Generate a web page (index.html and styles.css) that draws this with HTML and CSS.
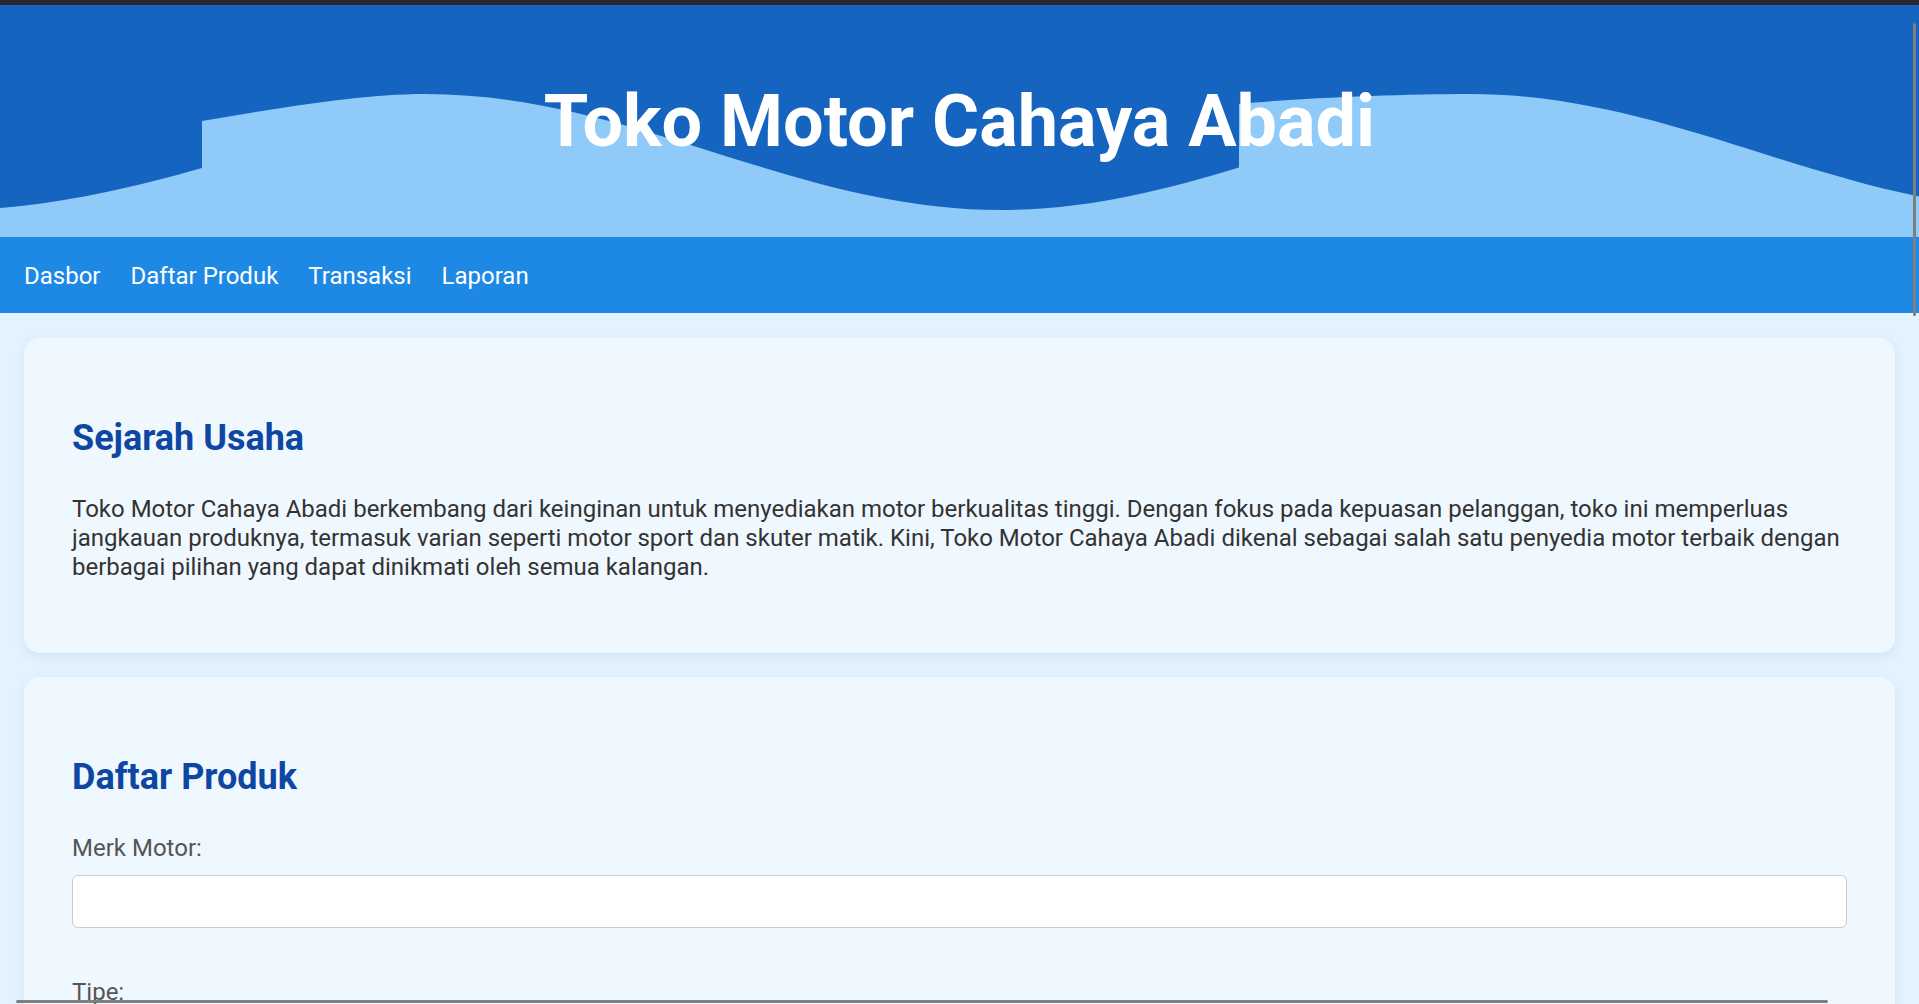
FILE: index.html
```html
<!DOCTYPE html>
<html lang="id">
<head>
<meta charset="utf-8">
<title>Toko Motor Cahaya Abadi</title>
<link rel="stylesheet" href="styles.css">
</head>
<body>
<div class="chrome-bar"></div>
<header class="site-header">
  <svg class="wave" viewBox="0 5 1919 232" preserveAspectRatio="none" aria-hidden="true">
    <defs>
      <clipPath id="clipLeft"><rect x="0" y="0" width="1239" height="300"/></clipPath>
    </defs>
    <path clip-path="url(#clipLeft)" fill="#90caf9" d="M0,237 L0,208 C60,204 140,186 202,168 L202,121 C280,108 360,94 425,94 C632,94 794,210 1001,210 C1208,210 1370,94 1577,94 L1577,237 Z"/>
    <path fill="#90caf9" d="M1239,237 L1239,104 C1300,98 1400,94 1470,94 C1677,94 1839,210 2046,210 L2046,237 Z"/>
  </svg>
  <h1 class="site-title">Toko Motor Cahaya Abadi</h1>
</header>
<nav class="main-nav">
  <a class="nav-link" href="#">Dasbor</a>
  <a class="nav-link" href="#">Daftar Produk</a>
  <a class="nav-link" href="#">Transaksi</a>
  <a class="nav-link" href="#">Laporan</a>
</nav>
<main class="content">
  <section class="card">
    <h2 class="card-title">Sejarah Usaha</h2>
    <p class="card-text">Toko Motor Cahaya Abadi berkembang dari keinginan untuk menyediakan motor berkualitas tinggi. Dengan fokus pada kepuasan pelanggan, toko ini memperluas jangkauan produknya, termasuk varian seperti motor sport dan skuter matik. Kini, Toko Motor Cahaya Abadi dikenal sebagai salah satu penyedia motor terbaik dengan berbagai pilihan yang dapat dinikmati oleh semua kalangan.</p>
  </section>
  <section class="card">
    <h2 class="card-title">Daftar Produk</h2>
    <form class="product-form">
      <div class="field">
        <label class="field-label" for="merk">Merk Motor:</label>
        <input class="field-input" id="merk" type="text">
      </div>
      <div class="field">
        <label class="field-label" for="tipe">Tipe:</label>
        <input class="field-input" id="tipe" type="text">
      </div>
      <div class="field">
        <label class="field-label" for="harga">Harga:</label>
        <input class="field-input" id="harga" type="number">
      </div>
    </form>
  </section>
</main>
<div class="scroll-thumb-v" aria-hidden="true"></div>
<div class="scroll-thumb-h" aria-hidden="true"></div>
</body>
</html>
```
FILE: styles.css
```css
html, body {
  margin: 0;
  padding: 0;
}
body {
  font-family: Roboto, "Liberation Sans", Arial, sans-serif;
  background: #e3f2fd;
  overflow: hidden;
}
.chrome-bar {
  height: 5px;
  background: #28272f;
}
.site-header {
  position: relative;
  height: 232px;
  background: #1565c0;
  display: flex;
  align-items: center;
  justify-content: center;
  overflow: hidden;
}
.wave {
  position: absolute;
  left: 0;
  top: 0;
  width: 1919px;
  height: 232px;
}
.site-title {
  position: relative;
  margin: 0;
  color: #ffffff;
  font-size: 72px;
  font-weight: 700;
  line-height: normal;
}
.main-nav {
  background: #1e88e5;
  padding: 25px 24px 23px;
  display: flex;
  gap: 30px;
}
.nav-link {
  color: #ffffff;
  text-decoration: none;
  font-size: 24px;
  line-height: 28px;
}
.content {
  padding: 25px 24px 24px;
  display: flex;
  flex-direction: column;
  gap: 24px;
}
.card {
  background: #f0f8ff;
  border-radius: 16px;
  padding: 48px;
  box-shadow: 0 4px 12px rgba(13, 71, 161, 0.08);
}
.card-title {
  margin: 31px 0 36px;
  color: #0d47a1;
  font-size: 36px;
  font-weight: 700;
  line-height: normal;
}
.card-text {
  margin: 0 0 23px;
  color: #333333;
  font-size: 24px;
  line-height: 29px;
}
.field {
  margin-bottom: 50px;
}
.field-label {
  display: block;
  color: #555555;
  font-size: 24px;
  line-height: 28px;
  margin-bottom: 13px;
}
.field-input {
  display: block;
  box-sizing: border-box;
  width: 100%;
  height: 53px;
  border: 1px solid #cccccc;
  border-radius: 6px;
  background: #ffffff;
  font-family: inherit;
  font-size: 20px;
  padding: 0 12px;
}
.scroll-thumb-v {
  position: fixed;
  right: 3px;
  top: 23px;
  width: 3px;
  height: 293px;
  border-radius: 2px;
  background: #7f7f7f;
}
.scroll-thumb-h {
  position: fixed;
  left: 16px;
  bottom: 1px;
  width: 1812px;
  height: 3px;
  border-radius: 2px;
  background: #7f7f7f;
}
```
